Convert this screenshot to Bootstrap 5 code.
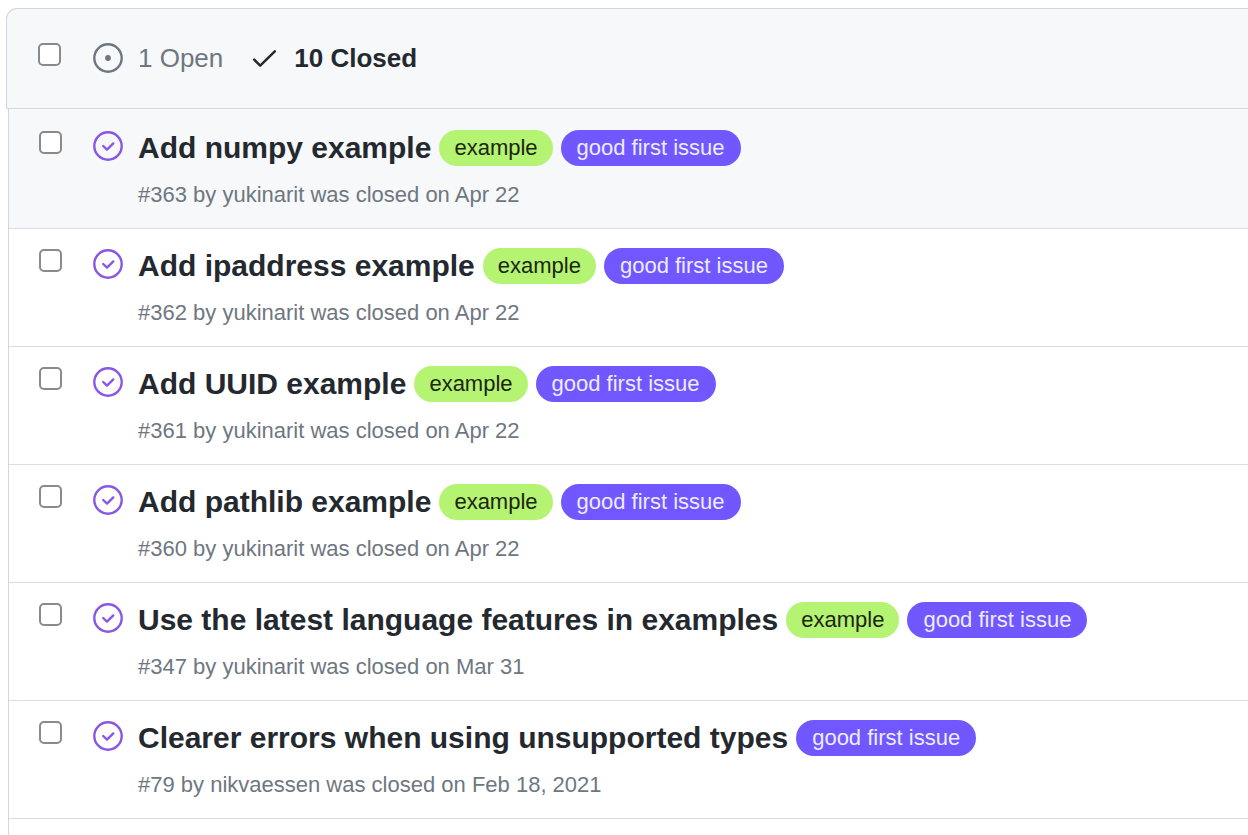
<!DOCTYPE html>
<html lang="en">
<head>
<meta charset="utf-8">
<meta name="viewport" content="width=device-width, initial-scale=1">
<title>Issues</title>
<link href="https://cdn.jsdelivr.net/npm/bootstrap@5.3.0/dist/css/bootstrap.min.css" rel="stylesheet">
<style>
body { font-family: "Liberation Sans", Arial, sans-serif; color: #24292f; background: #fff; }
.issue-box { padding: 8px 0 0 6px; overflow: hidden; }
.issue-head { height: 101px; padding: 0 16px 2px 31px; border: 1px solid #d0d7de; border-width: 1px 0 1px 1px; border-top-left-radius: 11px; background: #f6f8fa; font-size: 26px; line-height: 32px; }
.issue-list { margin-left: 2px; border-left: 1px solid #d0d7de; }
.issue-row { padding: 19px 16px 16px 30px; border-bottom: 1px solid #d8dee4; }
.issue-row:first-child { padding-top: 21px; background: #f6f8fa; }
.issue-check { appearance: none; flex: none; width: 23px; height: 23px; margin: 0; border: 2px solid #8a8a8a; border-radius: 5px; background: #fff; }
.issue-check:checked { background: #0969da; border-color: #0969da; }
.issue-row .issue-check { margin-top: 1px; }
.issue-head .issue-check { margin-bottom: 6px; }
.issue-icon { flex: none; width: 30px; height: 30px; }
.issue-row .issue-icon { margin: 1px 15px 0 31px; color: #8957e5; }
.state-nav { margin-left: 32px; gap: 26px; }
.state-link { gap: 15px; color: #6e7781; text-decoration: none; }
.state-link.current { color: #24292f; font-weight: 700; }
.title-line { column-gap: 8px; font-size: 30px; line-height: 36px; }
.title-link { color: #24292f; font-weight: 700; text-decoration: none; }
.issue-label { font-size: 22px; line-height: 36px; padding: 0 15px; border-radius: 18px; text-decoration: none; }
.label-example { background: #b5f372; color: #1c2611; }
.label-first { background: #7057ff; color: #eeebff; padding: 0 16px; }
.issue-meta { margin-top: 12px; font-size: 22px; line-height: 34px; color: #6e7781; }
.issue-meta a { color: inherit; text-decoration: none; }
</style>
</head>
<body>
<svg class="d-none" aria-hidden="true">
  <symbol id="closed" viewBox="0 0 30 30"><g fill="none" stroke="currentColor" stroke-width="2.4"><circle cx="15" cy="15" r="13.7"/><path stroke-linecap="round" stroke-linejoin="round" d="M10.2 15l3.8 3.6 6.3-6.2"/></g></symbol>
  <symbol id="open" viewBox="0 0 30 30"><circle cx="15" cy="15" r="13.7" fill="none" stroke="currentColor" stroke-width="2.4"/><circle cx="15" cy="15" r="2.9" fill="currentColor"/></symbol>
  <symbol id="tick" viewBox="0 0 30 30"><path fill="none" stroke="currentColor" stroke-width="2.5" stroke-linecap="round" stroke-linejoin="round" d="M5.2 16.6l6 6L25.8 8.4"/></symbol>
</svg>
<main class="issue-box">
  <header class="issue-head d-flex align-items-center">
    <input class="issue-check" type="checkbox" aria-label="Select all issues">
    <nav class="state-nav d-flex align-items-center">
      <a class="state-link d-flex align-items-center" href="#"><svg class="issue-icon"><use href="#open"/></svg>1 Open</a>
      <a class="state-link current d-flex align-items-center" href="#"><svg class="issue-icon"><use href="#tick"/></svg>10 Closed</a>
    </nav>
  </header>
  <div class="issue-list">
    <article class="issue-row d-flex align-items-start">
      <input class="issue-check" type="checkbox" aria-labelledby="i363"><svg class="issue-icon"><use href="#closed"/></svg>
      <div><div class="title-line d-flex flex-wrap"><a class="title-link" id="i363" href="#">Add numpy example</a><a class="issue-label label-example" href="#">example</a><a class="issue-label label-first" href="#">good first issue</a></div>
      <div class="issue-meta">#363 by <a href="#">yukinarit</a> was closed on Apr 22</div></div>
    </article>
    <article class="issue-row d-flex align-items-start">
      <input class="issue-check" type="checkbox" aria-labelledby="i362"><svg class="issue-icon"><use href="#closed"/></svg>
      <div><div class="title-line d-flex flex-wrap"><a class="title-link" id="i362" href="#">Add ipaddress example</a><a class="issue-label label-example" href="#">example</a><a class="issue-label label-first" href="#">good first issue</a></div>
      <div class="issue-meta">#362 by <a href="#">yukinarit</a> was closed on Apr 22</div></div>
    </article>
    <article class="issue-row d-flex align-items-start">
      <input class="issue-check" type="checkbox" aria-labelledby="i361"><svg class="issue-icon"><use href="#closed"/></svg>
      <div><div class="title-line d-flex flex-wrap"><a class="title-link" id="i361" href="#">Add UUID example</a><a class="issue-label label-example" href="#">example</a><a class="issue-label label-first" href="#">good first issue</a></div>
      <div class="issue-meta">#361 by <a href="#">yukinarit</a> was closed on Apr 22</div></div>
    </article>
    <article class="issue-row d-flex align-items-start">
      <input class="issue-check" type="checkbox" aria-labelledby="i360"><svg class="issue-icon"><use href="#closed"/></svg>
      <div><div class="title-line d-flex flex-wrap"><a class="title-link" id="i360" href="#">Add pathlib example</a><a class="issue-label label-example" href="#">example</a><a class="issue-label label-first" href="#">good first issue</a></div>
      <div class="issue-meta">#360 by <a href="#">yukinarit</a> was closed on Apr 22</div></div>
    </article>
    <article class="issue-row d-flex align-items-start">
      <input class="issue-check" type="checkbox" aria-labelledby="i347"><svg class="issue-icon"><use href="#closed"/></svg>
      <div><div class="title-line d-flex flex-wrap"><a class="title-link" id="i347" href="#">Use the latest language features in examples</a><a class="issue-label label-example" href="#">example</a><a class="issue-label label-first" href="#">good first issue</a></div>
      <div class="issue-meta">#347 by <a href="#">yukinarit</a> was closed on Mar 31</div></div>
    </article>
    <article class="issue-row d-flex align-items-start">
      <input class="issue-check" type="checkbox" aria-labelledby="i79"><svg class="issue-icon"><use href="#closed"/></svg>
      <div><div class="title-line d-flex flex-wrap"><a class="title-link" id="i79" href="#">Clearer errors when using unsupported types</a><a class="issue-label label-first" href="#">good first issue</a></div>
      <div class="issue-meta">#79 by <a href="#">nikvaessen</a> was closed on Feb 18, 2021</div></div>
    </article>
    <div class="pt-3"></div>
  </div>
</main>
<script src="https://cdn.jsdelivr.net/npm/bootstrap@5.3.0/dist/js/bootstrap.bundle.min.js"></script>
</body>
</html>
